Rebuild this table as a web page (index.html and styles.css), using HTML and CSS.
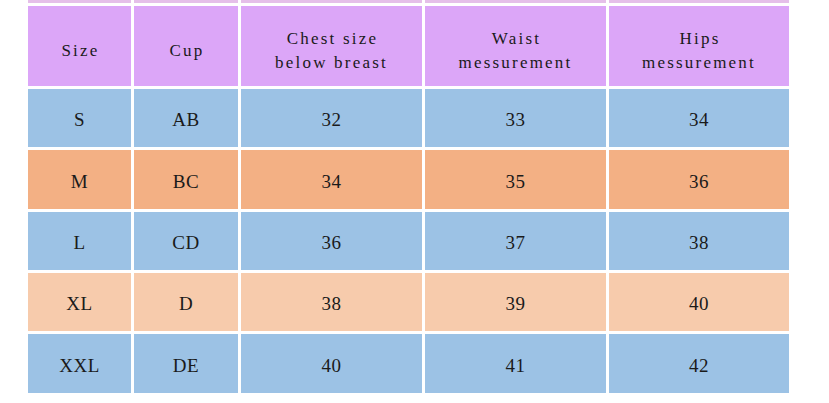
FILE: index.html
```html
<!DOCTYPE html>
<html>
<head>
<meta charset="utf-8">
<link rel="stylesheet" href="styles.css">
</head>
<body>
<table class="size-table">
  <colgroup>
    <col class="c-size"><col class="c-cup"><col class="c-wide"><col class="c-wide"><col class="c-last">
  </colgroup>
  <tr class="r-cut"><td></td><td></td><td></td><td></td><td></td></tr>
  <tr class="r-head">
    <td>Size</td><td>Cup</td><td>Chest size<br>below breast</td><td>Waist<br>messurement</td><td>Hips<br>messurement</td>
  </tr>
  <tr class="r-blue h58"><td>S</td><td>AB</td><td>32</td><td>33</td><td>34</td></tr>
  <tr class="r-orange h59"><td>M</td><td>BC</td><td>34</td><td>35</td><td>36</td></tr>
  <tr class="r-blue h58"><td>L</td><td>CD</td><td>36</td><td>37</td><td>38</td></tr>
  <tr class="r-peach h58"><td>XL</td><td>D</td><td>38</td><td>39</td><td>40</td></tr>
  <tr class="r-blue h59"><td>XXL</td><td>DE</td><td>40</td><td>41</td><td>42</td></tr>
</table>
</body>
</html>
```
FILE: styles.css
```css
html, body {
  margin: 0;
  padding: 0;
  background: #ffffff;
}
body {
  overflow: hidden;
}
.size-table {
  margin: -17px 0 0 25px;
  border-collapse: separate;
  border-spacing: 3px;
  table-layout: fixed;
  width: 766px;
  font-family: "Liberation Serif", "DejaVu Serif", serif;
  color: #1a1a1a;
}
.c-size { width: 103px; }
.c-cup { width: 104px; }
.c-wide { width: 181px; }
.c-last { width: 180px; }
.size-table td {
  padding: 0;
  text-align: center;
  vertical-align: middle;
  box-sizing: border-box;
}
.r-cut td {
  height: 17px;
  background: #e5bfe9;
}
.r-head td {
  height: 80px;
  background: #dca6f8;
  font-size: 17px;
  letter-spacing: 2.2px;
  text-indent: 2px;
  line-height: 24px;
  padding-top: 9px;
}
.h58 td { height: 58px; }
.h59 td { height: 59px; }
.r-blue td { background: #9cc2e5; }
.r-orange td { background: #f3b084; }
.r-peach td { background: #f7cbac; }
.r-blue td, .r-orange td, .r-peach td {
  font-size: 19px;
  letter-spacing: 0.5px;
  padding-top: 4px;
}
```
